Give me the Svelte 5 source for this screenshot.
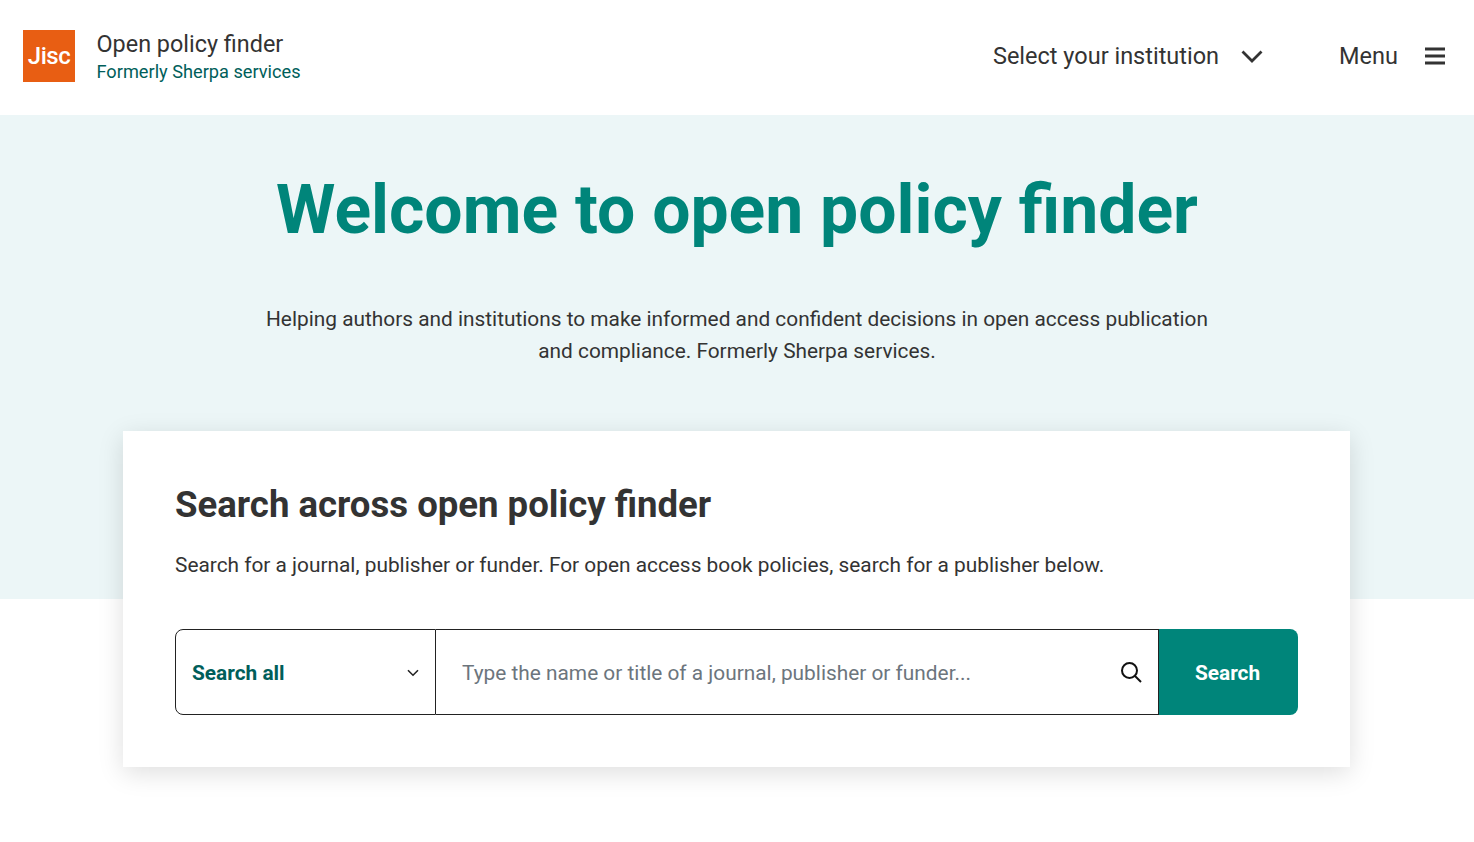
<script>
	let placeholder = 'Type the name or title of a journal, publisher or funder...';
</script>

<header class="site-header">
	<div class="brand">
		<div class="logo">Jisc</div>
		<div class="brand-text">
			<div class="brand-name">Open policy finder</div>
			<div class="brand-sub">Formerly Sherpa services</div>
		</div>
	</div>
	<nav class="nav">
		<button class="nav-btn institution">
			Select your institution
			<svg width="22" height="14" viewBox="0 0 22 14"><path d="M1.5 2.5l9.5 9.5 9.5-9.5" fill="none" stroke="#333" stroke-width="2.8" /></svg>
		</button>
		<button class="nav-btn menu">
			Menu
			<svg width="20" height="18" viewBox="0 0 20 18"><path d="M0 2h20M0 9h20M0 16h20" fill="none" stroke="#333" stroke-width="3" /></svg>
		</button>
	</nav>
</header>

<section class="hero">
	<h1>Welcome to open policy finder</h1>
	<p>Helping authors and institutions to make informed and confident decisions in open access publication<br />and compliance. Formerly Sherpa services.</p>
</section>

<main class="card">
	<h2>Search across open policy finder</h2>
	<p>Search for a journal, publisher or funder. For open access book policies, search for a publisher below.</p>
	<form class="search" onsubmit={(e) => e.preventDefault()}>
		<div class="select">
			<span>Search all</span>
			<svg width="12" height="8" viewBox="0 0 12 8"><path d="M1 1.2l5 5 5-5" fill="none" stroke="#222" stroke-width="1.6" /></svg>
		</div>
		<div class="input-wrap">
			<input type="text" {placeholder} />
			<svg class="glass" width="24" height="24" viewBox="0 0 24 24"><circle cx="10.5" cy="10.5" r="7.5" fill="none" stroke="#111" stroke-width="2" /><path d="M16 16l6 6" stroke="#111" stroke-width="2" /></svg>
		</div>
		<button class="go">Search</button>
	</form>
</main>

<style>
:global(body) {
	font-family: Roboto, "Liberation Sans", sans-serif;
	color: #333;
	background: #fff;
}

.site-header {
	height: 115px;
	display: flex;
	justify-content: space-between;
	align-items: center;
	padding: 0 29px 3px 23px;
	box-sizing: border-box;
}

.brand {
	display: flex;
	align-items: center;
	gap: 21.5px;
}

.brand-text {
	padding-top: 3px;
}

.logo {
	width: 52px;
	height: 52px;
	background: #e85e13;
	color: #fff;
	font-size: 24px;
	font-weight: 500;
	letter-spacing: -0.5px;
	display: flex;
	align-items: center;
	justify-content: center;
}

.brand-name {
	font-size: 23.4px;
	line-height: 28px;
	margin-bottom: 1px;
}

.brand-sub {
	font-size: 18.2px;
	line-height: 26px;
	color: #005e5a;
}

.nav {
	display: flex;
	align-items: center;
	gap: 76px;
}

.nav-btn {
	border: none;
	background: none;
	padding: 0;
	font: inherit;
	font-size: 23.5px;
	color: #333;
	display: flex;
	align-items: center;
}

.institution {
	gap: 22px;
}

.menu {
	gap: 27px;
}

.hero {
	height: 484px;
	background: #ecf6f7;
	text-align: center;
	box-sizing: border-box;
	padding-top: 55px;
}

.hero h1 {
	margin: 0;
	font-size: 67.85px;
	line-height: 80px;
	font-weight: 700;
	color: #00857a;
}

.hero p {
	margin: 53px 0 0;
	font-size: 20.85px;
	line-height: 32px;
}

.card {
	width: 1227px;
	height: 336px;
	box-sizing: border-box;
	margin: -168px 0 60px 123px;
	padding: 51px 52px;
	background: #fff;
	position: relative;
	box-shadow: 0 6px 24px rgba(0, 0, 0, 0.13);
}

.card h2 {
	margin: 0;
	font-size: 36.55px;
	line-height: 46px;
	font-weight: 700;
}

.card p {
	margin: 23px 0 0;
	font-size: 20.85px;
	line-height: 28px;
}

.search {
	display: flex;
	height: 86px;
	margin-top: 50px;
}

.select {
	width: 261px;
	box-sizing: border-box;
	border: 1px solid #222;
	border-radius: 8px 0 0 8px;
	padding: 2px 16px 0;
	display: flex;
	align-items: center;
	justify-content: space-between;
	font-size: 20.85px;
	font-weight: 700;
	color: #005e5a;
}

.input-wrap {
	flex: 1;
	display: flex;
	align-items: center;
	box-sizing: border-box;
	border: 1px solid #222;
	border-left: none;
	padding: 0 15px 0 26px;
}

.input-wrap input {
	flex: 1;
	border: none;
	outline: none;
	padding: 2px 0 0;
	font: inherit;
	font-size: 20.85px;
	color: #333;
}

.input-wrap input::placeholder {
	color: #6c757d;
	opacity: 1;
}

.go {
	width: 139px;
	border: none;
	border-radius: 0 8px 8px 0;
	background: #00857a;
	color: #fff;
	font: inherit;
	font-size: 20.85px;
	font-weight: 700;
	padding: 2px 2px 0 0;
}
</style>
